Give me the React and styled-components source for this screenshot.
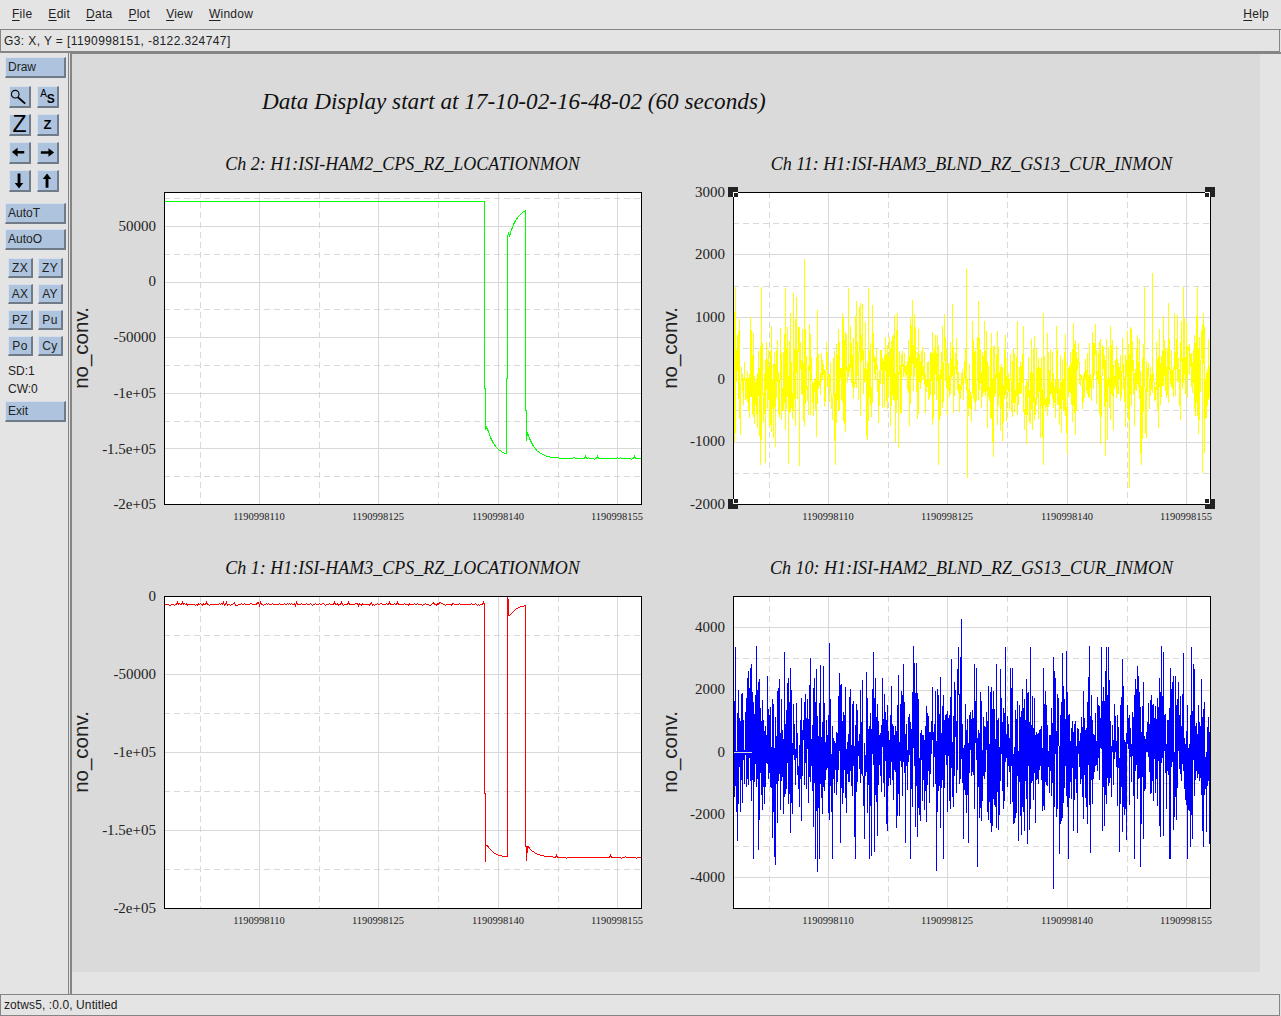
import React from 'react';
import styled, { createGlobalStyle } from 'styled-components';

const GlobalStyle = createGlobalStyle`
  html, body { margin: 0; padding: 0; background: #e4e4e4; }
  body { font-family: "Liberation Sans", Arial, sans-serif; color: #222; }
`;

const Window = styled.div`
  width: 1281px;
  height: 1016px;
  display: flex;
  flex-direction: column;
  overflow: hidden;
  background: #e4e4e4;
  font-size: 12px;
`;

const MenuBar = styled.div`
  box-sizing: border-box;
  height: 30px;
  flex: none;
  display: flex;
  align-items: center;
  gap: 16px;
  padding: 0 12px 1px;
  border-bottom: 1px solid #858585;
`;

const MenuItem = styled.span`
  letter-spacing: 0.25px;
  margin-left: ${(p) => (p.$push ? 'auto' : '0')};
  u { text-underline-offset: 2px; }
`;

const InfoBar = styled.div`
  box-sizing: border-box;
  height: 22px;
  flex: none;
  display: flex;
  align-items: center;
  padding: 0 3px;
  margin-right: 1px;
  border: 1px solid #858585;
  border-top: 0;
  letter-spacing: 0.4px;
`;

const Main = styled.div`
  flex: 1;
  min-height: 0;
  display: flex;
  border-top: 1px solid #858585;
`;

const Sidebar = styled.div`
  box-sizing: border-box;
  width: 69px;
  flex: none;
  display: flex;
  flex-direction: column;
  padding: 4px 2px 0 5px;
  border-right: 1px solid #858585;
`;

const RaisedButton = styled.div`
  box-sizing: border-box;
  display: flex;
  align-items: center;
  background: #aec4de;
  border-style: solid;
  border-color: #d6e0ec #6f7b88 #6f7b88 #d6e0ec;
  border-width: 1px 2px 2px 1px;
  color: #222;
`;

const WideButton = styled(RaisedButton)`
  width: 61px;
  height: 21px;
  padding-left: 2px;
  margin-top: ${(p) => p.$top}px;
`;

const IconGrid = styled.div`
  display: grid;
  grid-template-columns: 22px 22px;
  gap: 6px;
  margin: 8px 0 0 4px;
`;

const IconButton = styled(RaisedButton)`
  width: 22px;
  height: 22px;
  justify-content: center;
  color: #000;
`;

const ToolGrid = styled.div`
  display: grid;
  grid-template-columns: 25px 25px;
  grid-auto-rows: 20px;
  column-gap: 5px;
  row-gap: 6px;
  margin: 8px 0 0 3px;
`;

const ToolButton = styled(RaisedButton)`
  justify-content: center;
  letter-spacing: 0.3px;
`;

const StatusLine = styled.div`
  height: 18px;
  line-height: 18px;
  padding-left: 3px;
  margin-top: ${(p) => p.$top || 0}px;
`;

const BigZ = styled.span`
  font-size: 23px;
  line-height: 1;
`;

const SmallZ = styled.span`
  font-size: 13px;
  font-weight: 700;
`;

const AsGlyph = styled.span`
  display: flex;
  align-items: flex-start;
  font-size: 10px;
  line-height: 1;
  b {
    font-size: 12px;
    margin-top: 4px;
  }
`;

const CanvasWrap = styled.div`
  flex: 1;
  min-width: 0;
  margin-left: 1px;
  padding: 0 21px 22px 0;
  border-left: 2px solid #858585;
  border-top: 1px solid #858585;
  display: flex;
`;

const Canvas = styled.div`
  flex: 1;
  background: #dadada;
  display: flex;
  flex-direction: column;
`;

const Heading = styled.div`
  box-sizing: border-box;
  height: 98px;
  padding: 0 0 4px 190px;
  display: flex;
  align-items: center;
  font-family: "Liberation Serif", "Times New Roman", serif;
  font-style: italic;
  font-size: 23.2px;
  color: #111;
`;

const PlotGrid = styled.div`
  display: grid;
  grid-template-columns: 569px 569px;
  grid-auto-rows: 404px;
`;

const PlotCell = styled.div`
  display: flex;
  flex-direction: column;
`;

const PlotTitle = styled.div`
  height: 24px;
  line-height: 24px;
  padding-left: 92px;
  text-align: center;
  font-family: "Liberation Serif", "Times New Roman", serif;
  font-style: italic;
  font-size: 18px;
  color: #111;
  white-space: nowrap;
`;

const PlotSvg = styled.svg`
  display: block;
  overflow: visible;
`;

const YTick = styled.text`
  font-family: "Liberation Serif", "Times New Roman", serif;
  font-size: 15px;
  fill: #222;
  text-anchor: end;
`;

const XTick = styled.text`
  font-family: "Liberation Serif", "Times New Roman", serif;
  font-size: 10.5px;
  fill: #222;
  text-anchor: middle;
`;

const YLabel = styled.text`
  font-family: "Liberation Sans", Arial, sans-serif;
  font-size: 20.5px;
  fill: #222;
  text-anchor: middle;
`;

const StatusBar = styled.div`
  box-sizing: border-box;
  height: 22px;
  flex: none;
  display: flex;
  align-items: center;
  padding: 0 3px;
  margin-right: 1px;
  border: 1px solid #858585;
  letter-spacing: 0.1px;
`;

const W = 477;
const H = 312;
const OX = 92;
const OY = 16;

function rng(seed) {
  let a = seed;
  return () => {
    a = (a + 0x6d2b79f5) | 0;
    let t = Math.imul(a ^ (a >>> 15), 1 | a);
    t = (t + Math.imul(t ^ (t >>> 7), 61 | t)) ^ t;
    return ((t ^ (t >>> 14)) >>> 0) / 4294967296;
  };
}

function gauss(r) {
  return Math.sqrt(-2 * Math.log(r() + 1e-6)) * Math.cos(2 * Math.PI * r());
}

// half pixel offset keeps the 1px traces on one pixel column
function toPoints(list) {
  return list.map(([x, y]) => `${x + 0.5},${Math.round(y) + 0.5}`).join(' ');
}

function curve(from, to, fn) {
  const out = [];
  for (let x = from; x <= to; x++) out.push([x, fn(x)]);
  return out;
}

function jitter(from, to, base, amp, chance, seed) {
  const r = rng(seed);
  const out = [];
  for (let x = from; x <= to; x++) {
    out.push([x, base + (r() < chance ? Math.round((r() - 0.6) * amp) : 0)]);
  }
  return out;
}

const greenTrace = [
  [0, 9], [320, 9], [320, 196], [321, 196], [321, 237], [322, 235], [323, 237],
  ...curve(324, 342, (x) => 264 - 28 * Math.exp(-(x - 323) / 8)),
  [342, 186], [343, 186], [343, 46], [344, 40], [345, 44],
  ...curve(346, 361, (x) => 14 + 30 * Math.exp(-(x - 345) / 8)),
  [361, 218], [362, 218], [362, 248], [363, 240],
  ...curve(364, 394, (x) => 266 - 26 * Math.exp(-(x - 363) / 8)),
  ...jitter(395, 477, 266, 3, 0.3, 11),
];

const redTrace = [
  ...jitter(0, 320, 8, 3, 0.5, 5),
  [320, 197], [321, 197], [321, 265], [321, 249], [323, 249],
  ...curve(324, 343, (x) => 261 - 12 * Math.exp(-(x - 323) / 7)),
  [343, 0], [344, 6], [344, 19], [345, 19],
  ...curve(346, 361, (x) => 8 + 12 * Math.exp(-(x - 345) / 7)),
  [361, 250], [362, 250], [362, 264], [363, 250],
  ...curve(364, 391, (x) => 261 - 12 * Math.exp(-(x - 363) / 8)),
  ...jitter(392, 477, 261, 3, 0.12, 23),
];

function noiseTrace({ seed, zero, sd, slow, peaks, steps, tailChance, tailGain, top, bottom }) {
  const r = rng(seed);
  const out = [];
  let drift = 0;
  let lump = 1;
  for (let i = 0; i <= steps; i++) {
    const x = Math.round((i / steps) * (W - 1));
    drift = drift * 0.98 + gauss(r) * slow;
    if (i % 20 === 0) lump = 0.6 + r() * 0.9;
    const tail = r() < tailChance ? tailGain : 1;
    const y = zero - (drift + gauss(r) * sd * lump * tail);
    out.push([x, Math.max(top, Math.min(bottom, y))]);
    const hit = peaks.find((p) => p[0] === x);
    if (hit) out.push([x, hit[1]], [x, zero]);
  }
  return out;
}

const yellowTrace = noiseTrace({
  seed: 42,
  zero: 187,
  sd: 24,
  slow: 1.2,
  steps: 1150,
  tailChance: 0.06,
  tailGain: 2.1,
  top: 95,
  bottom: 272,
  peaks: [
    [71, 66], [52, 95], [60, 100], [233, 76], [127, 110], [419, 80], [396, 295],
    [66, 273], [234, 285], [469, 280], [32, 270], [2, 130], [310, 120],
  ],
});

const blueTrace = noiseTrace({
  seed: 77,
  zero: 156,
  sd: 34,
  slow: 0.9,
  steps: 2100,
  tailChance: 0.05,
  tailGain: 1.9,
  top: 50,
  bottom: 262,
  peaks: [
    [228, 22], [227, 60], [333, 54], [96, 46], [203, 274], [320, 292], [42, 268],
    [84, 275], [244, 270], [140, 55], [267, 72], [430, 55], [407, 270], [473, 235],
  ],
});

const plots = [
  {
    id: 'p2',
    title: 'Ch 2: H1:ISI-HAM2_CPS_RZ_LOCATIONMON',
    color: '#00ff00',
    trace: greenTrace,
    labelGap: 76,
    ticks: [['50000', 34], ['0', 89], ['-50000', 145], ['-1e+05', 201], ['-1.5e+05', 257], ['-2e+05', 312]],
  },
  {
    id: 'p11',
    title: 'Ch 11: H1:ISI-HAM3_BLND_RZ_GS13_CUR_INMON',
    color: '#ffff00',
    trace: yellowTrace,
    labelGap: 56,
    ticks: [['3000', 0], ['2000', 62], ['1000', 125], ['0', 187], ['-1000', 249], ['-2000', 312]],
    handles: true,
  },
  {
    id: 'p1',
    title: 'Ch 1: H1:ISI-HAM3_CPS_RZ_LOCATIONMON',
    color: '#ff0000',
    trace: redTrace,
    labelGap: 76,
    ticks: [['0', 0], ['-50000', 78], ['-1e+05', 156], ['-1.5e+05', 234], ['-2e+05', 312]],
  },
  {
    id: 'p10',
    title: 'Ch 10: H1:ISI-HAM2_BLND_RZ_GS13_CUR_INMON',
    color: '#0000ff',
    trace: blueTrace,
    labelGap: 56,
    ticks: [['4000', 31], ['2000', 93], ['0', 156], ['-2000', 218], ['-4000', 281]],
    zeroMark: true,
  },
];

const gridX = [36, 95, 155, 214, 274, 334, 394, 453];
const xLabels = [
  ['1190998110', 95],
  ['1190998125', 214],
  ['1190998140', 334],
  ['1190998155', 453],
];

function horizontalGrid(ticks) {
  const first = ticks[0][1];
  const step = (ticks[ticks.length - 1][1] - first) / (ticks.length - 1);
  const lines = [];
  for (let i = -4; i < 14; i++) {
    const y = first + (i * step) / 2;
    if (y > 2 && y < H - 2) lines.push({ y: Math.round(y), dashed: i % 2 !== 0 });
  }
  return lines;
}

function Handle({ x, y, dx, dy }) {
  return (
    <g>
      <rect x={x - 5} y={y - 5} width="10" height="10" fill="#222" />
      <path d={`M${x + dx * 0.5} ${y + dy * 5}V${y + dy * 0.5}H${x + dx * 5}`} fill="none" stroke="#fff" />
    </g>
  );
}

function Plot({ plot }) {
  return (
    <PlotCell>
      <PlotTitle>{plot.title}</PlotTitle>
      <PlotSvg width="569" height="380">
        <YLabel transform={`translate(${OX - plot.labelGap} ${OY + H / 2}) rotate(-90)`}>no_conv.</YLabel>
        {plot.ticks.map(([label, y]) => (
          <YTick key={label} x={OX - 8} y={OY + y + 5}>{label}</YTick>
        ))}
        {xLabels.map(([label, x]) => (
          <XTick key={label} x={OX + x} y={OY + H + 16}>{label}</XTick>
        ))}
        <g transform={`translate(${OX} ${OY})`} shapeRendering="crispEdges">
          <rect width={W} height={H} fill="#fff" />
          {gridX.map((x, i) => (
            <line
              key={x}
              x1={x + 0.5}
              x2={x + 0.5}
              y1="0"
              y2={H}
              stroke="#d9d9d9"
              strokeDasharray={i % 2 === 0 ? '6 4' : undefined}
            />
          ))}
          {horizontalGrid(plot.ticks).map((l) => (
            <line
              key={l.y}
              x1="0"
              x2={W}
              y1={l.y + 0.5}
              y2={l.y + 0.5}
              stroke="#d9d9d9"
              strokeDasharray={l.dashed ? '6 4' : undefined}
            />
          ))}
          <polyline points={toPoints(plot.trace)} fill="none" stroke={plot.color} strokeWidth="1" />
          {plot.zeroMark && <line x1="1" x2="19" y1="156.5" y2="156.5" stroke="#d9d9d9" />}
          <rect x="0.5" y="0.5" width={W} height={H} fill="none" stroke="#000" />
          {plot.handles && (
            <>
              <Handle x={0} y={0} dx={1} dy={1} />
              <Handle x={W} y={0} dx={-1} dy={1} />
              <Handle x={0} y={H} dx={1} dy={-1} />
              <Handle x={W} y={H} dx={-1} dy={-1} />
            </>
          )}
        </g>
      </PlotSvg>
    </PlotCell>
  );
}

function ArrowIcon({ d }) {
  return (
    <svg width="20" height="20" viewBox="0 0 20 20">
      <path d={d} fill="#000" />
    </svg>
  );
}

const menus = ['File', 'Edit', 'Data', 'Plot', 'View', 'Window'];
const tools = ['ZX', 'ZY', 'AX', 'AY', 'PZ', 'Pu', 'Po', 'Cy'];

export default function App() {
  return (
    <Window>
      <GlobalStyle />
      <MenuBar>
        {menus.map((m) => (
          <MenuItem key={m}><u>{m[0]}</u>{m.slice(1)}</MenuItem>
        ))}
        <MenuItem $push><u>H</u>elp</MenuItem>
      </MenuBar>
      <InfoBar>G3: X, Y = [1190998151, -8122.324747]</InfoBar>
      <Main>
        <Sidebar>
          <WideButton $top={0}>Draw</WideButton>
          <IconGrid>
            <IconButton>
              <svg width="20" height="20" viewBox="0 0 20 20">
                <circle cx="5.5" cy="7" r="4" fill="none" stroke="#000" strokeWidth="1.2" />
                <line x1="8" y1="10" x2="16" y2="17" stroke="#000" strokeWidth="2" />
              </svg>
            </IconButton>
            <IconButton><AsGlyph>A<b>S</b></AsGlyph></IconButton>
            <IconButton><BigZ>Z</BigZ></IconButton>
            <IconButton><SmallZ>Z</SmallZ></IconButton>
            <IconButton><ArrowIcon d="M2 9 8 4.5V8H15V10.5H8V14Z" /></IconButton>
            <IconButton><ArrowIcon d="M17 9.5 11 5V8.2H3V10.8H11V14Z" /></IconButton>
            <IconButton><ArrowIcon d="M9.5 18 14 12H11V2H8V12H5Z" /></IconButton>
            <IconButton><ArrowIcon d="M9.5 2 14 8H11V17H8V8H5Z" /></IconButton>
          </IconGrid>
          <WideButton $top={11}>AutoT</WideButton>
          <WideButton $top={5}>AutoO</WideButton>
          <ToolGrid>
            {tools.map((t) => <ToolButton key={t}>{t}</ToolButton>)}
          </ToolGrid>
          <StatusLine $top={6}>SD:1</StatusLine>
          <StatusLine>CW:0</StatusLine>
          <WideButton $top={3}>Exit</WideButton>
        </Sidebar>
        <CanvasWrap>
          <Canvas>
            <Heading>Data Display start at 17-10-02-16-48-02 (60 seconds)</Heading>
            <PlotGrid>
              {plots.map((p) => <Plot key={p.id} plot={p} />)}
            </PlotGrid>
          </Canvas>
        </CanvasWrap>
      </Main>
      <StatusBar>zotws5, :0.0, Untitled</StatusBar>
    </Window>
  );
}
